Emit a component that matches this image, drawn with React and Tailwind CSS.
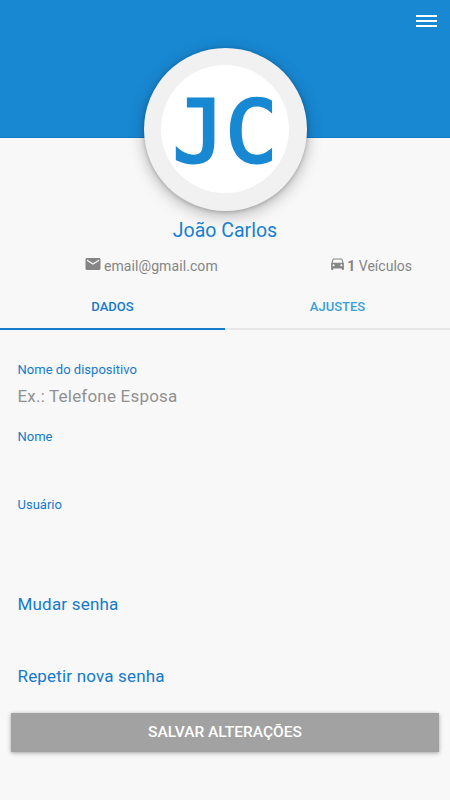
import { useState } from 'react';
import { MdEmail, MdDirectionsCar } from 'react-icons/md';

const TABS = [
  { id: 'dados', label: 'DADOS' },
  { id: 'ajustes', label: 'AJUSTES' },
];

function Avatar({ initials }) {
  return (
    <div className="w-[163px] h-[163px] shrink-0 pb-px rounded-full bg-[#f1f1f1] flex items-center justify-center shadow-[0_4px_16px_rgba(0,0,0,0.28),0_1px_4px_rgba(0,0,0,0.2)]">
      <div className="w-32 h-32 rounded-full bg-white flex items-center justify-center">
        <span className="pt-[6px] font-['DejaVu_Sans_Mono',monospace] text-[86px] leading-none tracking-[1px] -mr-px text-[#1888d3] [-webkit-text-stroke:3px_#1888d3]">
          {initials}
        </span>
      </div>
    </div>
  );
}

export default function App() {
  const [tab, setTab] = useState('dados');

  return (
    <div className="w-full h-[800px] overflow-hidden bg-[#f8f8f8] font-['Roboto',sans-serif] flex flex-col">
      {/* Header */}
      <header className="h-[138px] shrink-0 bg-[#1888d3] border-b border-[#1078c4] px-[13px] pt-[15px] flex justify-end items-start">
        <button aria-label="Menu" className="w-[21px] flex flex-col gap-[3px]">
          <span className="h-0.5 bg-white" />
          <span className="h-0.5 bg-white" />
          <span className="h-0.5 bg-white" />
        </button>
      </header>

      {/* Profile */}
      <section className="-mt-[90px] flex flex-col items-center">
        <Avatar initials="JC" />
        <h1 className="mt-[6px] text-[19.5px] leading-7 text-[#1680d0]">João Carlos</h1>
      </section>
      <div className="mt-[11px] h-5 shrink-0 pl-[84px] pr-[38px] flex justify-between text-sm leading-5 text-[#858585]">
        <span className="flex">
          <MdEmail size={18} className="-mt-px mr-[2px]" />
          <span className="tracking-[0.08px]">email@gmail.com</span>
        </span>
        <span className="flex">
          <MdDirectionsCar size={17} className="-mt-px mr-px" />
          <span><b>1</b> Veículos</span>
        </span>
      </div>

      {/* Tabs */}
      <nav className="mt-[9px] h-[45px] shrink-0 flex">
        {TABS.map(({ id, label }) => (
          <button
            key={id}
            onClick={() => setTab(id)}
            className={`flex-1 text-[13px] font-medium border-b-2 ${
              tab === id ? 'text-[#147acb] border-[#147acb]' : 'text-[#379fdd] border-[#e7e7e7]'
            }`}
          >
            {label}
          </button>
        ))}
      </nav>

      {/* Form */}
      <form className="flex flex-col text-[#147acb]">
        <label className="mt-[30px] ml-[17.5px] text-[13px] leading-5 tracking-[0.02px]">Nome do dispositivo</label>
        <input
          placeholder="Ex.: Telefone Esposa"
          className="mt-[4px] ml-[17.5px] h-6 text-[17px] leading-6 tracking-[0.2px] bg-transparent outline-none placeholder:text-[#919191]"
        />
        <label className="mt-[19px] ml-[17.5px] text-[13px] leading-5">Nome</label>
        <label className="mt-[48px] ml-[17.5px] text-[13px] leading-5">Usuário</label>
        <label className="mt-[77px] ml-[17.5px] text-[17px] leading-6 tracking-[0.2px]">Mudar senha</label>
        <label className="mt-[48px] ml-[17.5px] text-[17px] leading-6 tracking-[0.18px]">Repetir nova senha</label>
        <button
          type="button"
          className="mt-[25px] mx-[11px] h-[39px] bg-[#a2a2a2] text-white text-[15.5px] font-medium shadow-[0_1px_4px_rgba(0,0,0,0.35)]"
        >
          SALVAR ALTERAÇÕES
        </button>
      </form>
    </div>
  );
}
